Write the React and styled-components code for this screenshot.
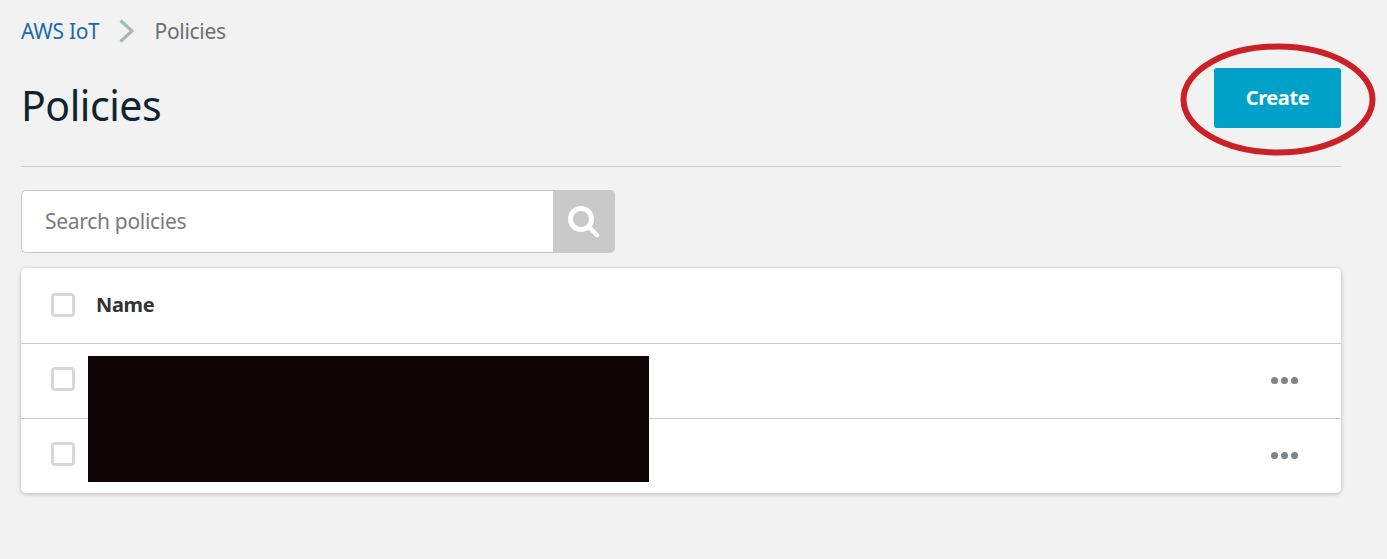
import React from 'react';
import styled, { createGlobalStyle } from 'styled-components';

const Global = createGlobalStyle`
  html, body { margin: 0; padding: 0; background: #f2f2f2; }
  body { font-family: "Noto Sans", "Open Sans", sans-serif; }
`;

const Page = styled.div`
  position: relative;
  width: 1387px;
  height: 559px;
  box-sizing: border-box;
  padding: 0 46px 0 21px;
  overflow: hidden;
  background: #f2f2f2;
`;

const Breadcrumbs = styled.nav`
  height: 62px;
  padding-bottom: 1px;
  box-sizing: border-box;
  display: flex;
  align-items: center;
  font-size: 21px;
  letter-spacing: -0.3px;
`;
const Crumb = styled.a`
  color: #1b6ca8;
  text-decoration: none;
`;
const Current = styled.span`
  color: #687078;
`;
const Chevron = styled.svg`
  width: 16px;
  height: 24px;
  margin: 0 20px 0 19px;
`;

const Header = styled.header`
  height: 105px;
  box-sizing: border-box;
  padding-top: 6px;
  display: flex;
  justify-content: space-between;
  align-items: flex-start;
  border-bottom: 1px solid #cfcfcf;
`;
const Title = styled.h1`
  margin: 6px 0 0;
  font-size: 41px;
  font-weight: 400;
  line-height: 63px;
  letter-spacing: -0.45px;
  color: #0d2530;
`;
const CreateButton = styled.button`
  width: 127px;
  height: 60px;
  border: 0;
  border-radius: 3px;
  background: #00a1c9;
  color: #fff;
  font: 700 20px "Noto Sans", sans-serif;
  letter-spacing: -0.4px;
  padding: 0 0 2px;
`;

const Search = styled.div`
  margin-top: 23px;
  width: 594px;
  height: 63px;
  display: flex;
`;
const SearchInput = styled.div`
  flex: 1;
  box-sizing: border-box;
  display: flex;
  align-items: center;
  padding: 0 0 2px 23px;
  background: #fff;
  border: 1px solid #c6c6c6;
  border-right: 0;
  border-radius: 5px 0 0 5px;
  color: #7b7b7b;
  font-size: 21px;
  letter-spacing: -0.3px;
`;
const SearchButton = styled.div`
  width: 62px;
  display: flex;
  align-items: center;
  justify-content: center;
  background: #c9c9c9;
  border-radius: 0 5px 5px 0;
`;

const Card = styled.section`
  margin-top: 15px;
  background: #fff;
  border-radius: 5px;
  box-shadow: 0 1px 4px rgba(0, 0, 0, 0.25);
`;
const Row = styled.div`
  height: 75px;
  box-sizing: border-box;
  display: flex;
  align-items: center;
  padding: 0 0 2px 30px;
  & + & {
    border-top: 1px solid #cacaca;
    padding-bottom: 4px;
  }
`;
const Check = styled.span`
  width: 24px;
  height: 24px;
  box-sizing: border-box;
  border: 3px solid #d8d8d8;
  border-radius: 4px;
  background: #fff;
  flex: none;
`;
const ColName = styled.span`
  margin-left: 21px;
  font-size: 20px;
  font-weight: 700;
  letter-spacing: -0.35px;
  color: #333;
`;
const Menu = styled.span`
  margin: 2px 43px 0 auto;
  display: flex;
  gap: 3px;
`;
const Dot = styled.i`
  width: 7px;
  height: 7px;
  border-radius: 50%;
  background: #7f8488;
`;

const Redaction = styled.div`
  position: absolute;
  left: 88px;
  top: 356px;
  width: 561px;
  height: 126px;
  background: #0f0506;
`;
const Ring = styled.svg`
  position: absolute;
  left: 1178px;
  top: 40px;
  width: 200px;
  height: 120px;
  pointer-events: none;
`;

const RowMenu = () => (
  <Menu>
    <Dot />
    <Dot />
    <Dot />
  </Menu>
);

export default function App() {
  return (
    <Page>
      <Global />
      <Breadcrumbs>
        <Crumb>AWS IoT</Crumb>
        <Chevron viewBox="0 0 16 24">
          <path d="M1.5 1.5 L13 12 L1.5 22.5" fill="none" stroke="#aab7b8" strokeWidth="3.2" />
        </Chevron>
        <Current>Policies</Current>
      </Breadcrumbs>
      <Header>
        <Title>Policies</Title>
        <CreateButton>Create</CreateButton>
      </Header>
      <Search>
        <SearchInput>Search policies</SearchInput>
        <SearchButton>
          <svg width="34" height="34" viewBox="0 0 34 34">
            <circle cx="14" cy="14" r="10.5" fill="none" stroke="#fff" strokeWidth="5" />
            <path d="M22.5 22.5 L30 30" stroke="#fff" strokeWidth="4.5" strokeLinecap="round" />
          </svg>
        </SearchButton>
      </Search>
      <Card>
        <Row>
          <Check />
          <ColName>Name</ColName>
        </Row>
        <Row>
          <Check />
          <RowMenu />
        </Row>
        <Row>
          <Check />
          <RowMenu />
        </Row>
      </Card>
      <Redaction />
      <Ring viewBox="0 0 200 120">
        <ellipse cx="100" cy="59.5" rx="94.5" ry="53" fill="none" stroke="#cc2027" strokeWidth="6" />
      </Ring>
    </Page>
  );
}
